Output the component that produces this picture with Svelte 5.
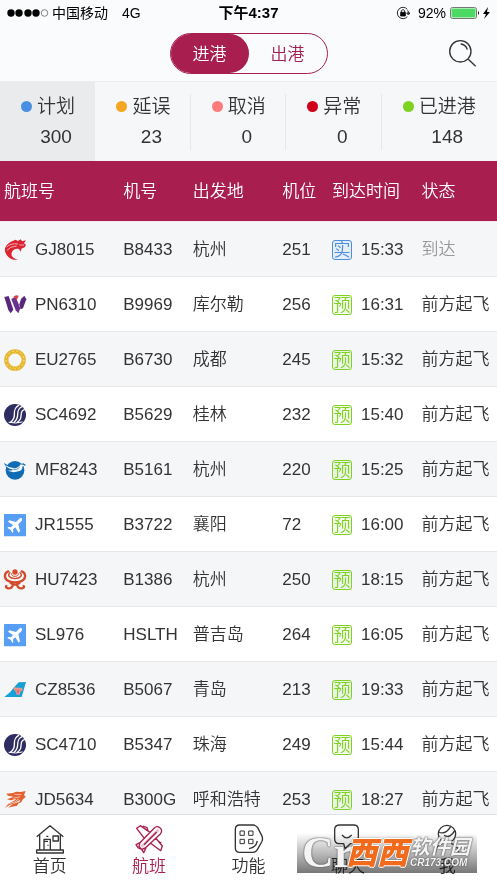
<script>
	const stats = [
		{ label: '计划', count: 300, color: '#4a90e2' },
		{ label: '延误', count: 23, color: '#f5a623' },
		{ label: '取消', count: 0, color: '#ff7b7b' },
		{ label: '异常', count: 0, color: '#d0021b' },
		{ label: '已进港', count: 148, color: '#7ed321' }
	];

	const columns = ['航班号', '机号', '出发地', '机位', '到达时间', '状态'];

	const flights = [
		{ logo: 'gj', no: 'GJ8015', plane: 'B8433', from: '杭州', gate: 251, time: '15:33', arrived: true },
		{ logo: 'pn', no: 'PN6310', plane: 'B9969', from: '库尔勒', gate: 256, time: '16:31' },
		{ logo: 'eu', no: 'EU2765', plane: 'B6730', from: '成都', gate: 245, time: '15:32' },
		{ logo: 'sc', no: 'SC4692', plane: 'B5629', from: '桂林', gate: 232, time: '15:40' },
		{ logo: 'mf', no: 'MF8243', plane: 'B5161', from: '杭州', gate: 220, time: '15:25' },
		{ logo: 'plane', no: 'JR1555', plane: 'B3722', from: '襄阳', gate: 72, time: '16:00' },
		{ logo: 'hu', no: 'HU7423', plane: 'B1386', from: '杭州', gate: 250, time: '18:15' },
		{ logo: 'plane', no: 'SL976', plane: 'HSLTH', from: '普吉岛', gate: 264, time: '16:05' },
		{ logo: 'cz', no: 'CZ8536', plane: 'B5067', from: '青岛', gate: 213, time: '19:33' },
		{ logo: 'sc', no: 'SC4710', plane: 'B5347', from: '珠海', gate: 249, time: '15:44' },
		{ logo: 'jd', no: 'JD5634', plane: 'B300G', from: '呼和浩特', gate: 253, time: '18:27' }
	];

	const tabs = [
		{ icon: 'home', label: '首页' },
		{ icon: 'flight', label: '航班' },
		{ icon: 'apps', label: '功能' },
		{ icon: 'chat', label: '聊天' },
		{ icon: 'me', label: '我' }
	];

	let direction = $state('进港');
	let selected = $state('计划');
	let tab = $state('航班');
</script>

{#snippet airline(name)}
	<svg class="logo" viewBox="0 0 66 66" aria-hidden="true">
		{#if name === 'gj'}
			<path
				fill="#dd2430"
				d="M28 5C8 12-2 28 5 42C10 55 24 65 42 62C28 59 20 51 23 41C26 32 38 27 45 31L51 38L52 29L62 25L66 17L60 13L66 4L54 7L50 1L42 6L34 2Z"
			/>
			<path
				fill="none"
				stroke="#f4f6f8"
				stroke-width="2"
				d="M8 24Q20 12 42 15M9 34Q18 22 38 21M46 18L60 18"
			/>
		{:else if name === 'pn'}
			<path fill="#58267c" d="M1 9L14 6L28 47L20 58L13 48Z" />
			<path fill="#6a328c" d="M22 15L35 8L49 43L43 58L35 49Z" />
			<path fill="#58267c" d="M51 15L61 5L67 16L57 43L50 46L46 31Z" />
			<path fill="#e23b45" d="M27 10Q36 0 44 6L38 18Q33 9 27 10Z" />
		{:else if name === 'eu'}
			<circle cx="33" cy="33" r="26" fill="none" stroke="#e5b52c" stroke-width="13" />
			<circle
				cx="33"
				cy="33"
				r="27"
				fill="none"
				stroke="#f7df87"
				stroke-width="3"
				stroke-dasharray="7 6"
			/>
			<circle
				cx="33"
				cy="33"
				r="21"
				fill="none"
				stroke="#f5e2a0"
				stroke-width="2"
				stroke-dasharray="4 5"
			/>
		{:else if name === 'sc'}
			<circle cx="33" cy="33" r="33" fill="#2e2c60" />
			<g fill="none" stroke="#fff" stroke-linecap="round">
				<path stroke-width="4" d="M44 4C24 15 35 31 29 43Q26 51 19 55" />
				<path stroke-width="4" d="M54 8C36 16 44 30 39 43Q36 51 30 55" />
				<path stroke-width="4" d="M61 17C47 20 54 35 49 45Q45 52 40 55" />
				<path stroke-width="3" d="M15 55Q35 60 55 54" />
			</g>
		{:else if name === 'mf'}
			<circle cx="33" cy="34" r="28" fill="#126cb5" />
			<path fill="#126cb5" d="M0 12Q14 22 30 25L20 36Q6 28 0 12ZM50 16L58 13L66 18L54 24Z" />
			<path
				fill="#f4f6f8"
				d="M3 17Q16 27 31 28Q43 27 50 16L57 17L62 19L55 23Q56 34 44 37Q25 43 9 34Q21 36 28 32Q10 29 3 17Z"
			/>
			<path fill="none" stroke="#126cb5" stroke-width="2" d="M28 32Q39 33 47 25" />
		{:else if name === 'plane'}
			<rect width="66" height="67" rx="2" fill="#579ef5" />
			<path
				fill="#fff"
				d="M53 13C56 16 54 20 50 24L43 31L48 52L44 56L34 40L27 46L28 54L25 57L20 47L10 42L13 39L21 40L27 33L12 23L16 19L36 24L43 17C47 13 50 11 53 13Z"
			/>
		{:else if name === 'hu'}
			<g fill="none" stroke="#d34a2c" stroke-linecap="round">
				<path stroke-width="7" d="M13 7C-2 13 0 32 16 37Q33 43 50 37C66 32 68 13 53 7" />
				<path stroke-width="4" d="M18 11C9 19 16 28 33 29C50 28 57 19 48 11" />
				<path stroke-width="3" d="M23 14Q22 22 33 22Q44 22 43 14" />
				<path
					stroke-width="7"
					d="M20 42Q28 47 33 47Q38 47 46 42M27 47Q24 59 12 58Q3 55 7 51M39 47Q42 59 54 58Q63 55 59 51"
				/>
			</g>
			<circle cx="33" cy="9" r="8" fill="#d34a2c" />
		{:else if name === 'cz'}
			<path fill="#16a0d5" d="M66 9L44 10Q31 24 18 40L1 54L53 54Z" />
			<path
				fill="#ed9b97"
				d="M29 28Q35 22 39 28Q42 21 46 28Q52 23 56 30Q56 36 49 38L47 47H38L36 39Q28 35 29 28Z"
			/>
			<path fill="none" stroke="#d94c52" stroke-width="2" d="M33 31L42 40L51 31M42 29V45" />
		{:else}
			<path
				fill="#e3602f"
				d="M7 14L27 12L36 8L50 9L65 6L60 18L65 24L57 31L51 40L44 44L49 32L36 39Q25 47 15 49L3 57L13 44L30 35L38 29L20 34L9 31L29 23L12 20Z"
			/>
			<path fill="#e3602f" d="M46 38L39 50L24 53L12 56L27 45Z" />
			<path fill="none" stroke="#f8e5dc" stroke-width="2" d="M31 16L52 17M27 28L48 23M14 45Q34 40 45 29" />
		{/if}
	</svg>
{/snippet}

{#snippet tabIcon(name)}
	<svg class="tab-icon" viewBox="0 0 90 90" aria-hidden="true">
		{#if name === 'home'}
			<path
				d="M5 38L45 5L85 38M14 32V78M76 32V78M5 78H85V87H5ZM27 78V46H46V78M27 52H39M39 62V65M34 37H40M54 36H70V51H54Z"
			/>
		{:else if name === 'flight'}
			<path
				d="M76 10C84 14 85 23 79 30L34 72L23 76L15 67L18 56L61 12Q68 5 76 10ZM48 25L19 5L8 13L31 43M65 42L85 66L80 80L50 58M18 56L6 62L13 72L23 76L29 86L36 71M30 62L68 24M27 6L39 11L42 20M72 51L82 57"
			/>
			<path d="M22 69L74 17" stroke-width="9" opacity="0.25" />
		{:else if name === 'apps'}
			<path
				d="M17 3H58Q65 3 71 11L83 34Q88 44 83 54L70 77Q65 85 57 85H17Q4 85 4 72V16Q4 3 17 3ZM45 74Q66 71 70 51"
			/>
			<path
				stroke-width="3"
				d="M18 21H31V34H18ZM44 21H57V34H44ZM18 46H31V59H18ZM44 46H57V59H44Z"
			/>
		{:else if name === 'chat'}
			<path
				d="M18 3H64Q76 4 76 17V44Q76 58 62 59H52L36 74L32 59H18Q5 58 5 44V17Q5 4 18 3ZM27 33Q41 50 56 33"
			/>
		{:else}
			<circle cx="45" cy="30" r="26" />
			<path d="M20 24Q40 34 56 8M36 34Q56 44 68 20M10 87Q11 65 33 58M57 58Q79 65 80 87" />
		{/if}
	</svg>
{/snippet}

<div class="app">
	<div class="status-bar">
		<div class="carrier">
			<svg width="42" height="10" viewBox="0 0 42 10" aria-hidden="true">
				{#each [4, 12, 21, 29] as x}
					<circle cx={x} cy="5" r="3.7" />
				{/each}
				<circle cx="37.5" cy="5" r="3.3" fill="none" stroke="#555" stroke-width="0.7" />
			</svg>
			<span>中国移动</span>
			<span class="network">4G</span>
		</div>
		<strong>下午4:37</strong>
		<div class="power">
			<svg width="14" height="14" viewBox="0 0 42 42" aria-hidden="true">
				<path
					d="M34 10A17 17 0 1 0 34 32M35 13Q38 18 37 23M32 21L37 27L42 21Z"
					fill="none"
					stroke="#000"
					stroke-width="2.5"
				/>
				<path d="M14 19H28V30H14ZM16 19V14Q21 7 26 14V19" stroke="#000" stroke-width="2.5" fill="none" />
				<path d="M14 19H28V30H14Z" />
			</svg>
			<span class="percent">92%</span>
			<svg width="40" height="14" viewBox="0 0 40 14" aria-hidden="true">
				<rect x="0.5" y="1.5" width="26" height="11" rx="2" fill="#fff" stroke="#777" />
				<rect x="1.5" y="2.5" width="24" height="9" rx="1" fill="#4cd964" />
				<path d="M28 5Q30 7 28 9Z" />
				<path d="M38 1L33 8H36L34 13L40 6H37Z" />
			</svg>
		</div>
	</div>

	<header>
		<div class="toggle">
			{#each ['进港', '出港'] as name}
				<button class:active={direction === name} onclick={() => (direction = name)}>{name}</button>
			{/each}
		</div>
		<button class="search" aria-label="搜索">
			<svg width="28" height="28" viewBox="0 0 84 84">
				<circle cx="34" cy="34" r="32" />
				<path d="M57 57L80 79M35 12Q50 13 55 29" />
			</svg>
		</button>
	</header>

	<div class="stats">
		{#each stats as stat}
			<button class:active={selected === stat.label} onclick={() => (selected = stat.label)}>
				<i style="background: {stat.color}"></i>
				<span>{stat.label}</span>
				<span class="count">{stat.count}</span>
			</button>
		{/each}
	</div>

	<main>
		<table>
			<thead>
				<tr>
					{#each columns as column}
						<th>{column}</th>
					{/each}
				</tr>
			</thead>
			<tbody>
				{#each flights as flight}
					<tr>
						<td>
							<div class="flight">
								{@render airline(flight.logo)}
								<span>{flight.no}</span>
							</div>
						</td>
						<td>{flight.plane}</td>
						<td>{flight.from}</td>
						<td>{flight.gate}</td>
						<td>
							<div class="time">
								<span class="badge" class:actual={flight.arrived}>{flight.arrived ? '实' : '预'}</span>
								<span>{flight.time}</span>
							</div>
						</td>
						<td class:muted={flight.arrived}>{flight.arrived ? '到达' : '前方起飞'}</td>
					</tr>
				{/each}
			</tbody>
		</table>
	</main>

	<nav>
		{#each tabs as item}
			<a href="#{item.icon}" class:active={tab === item.label} onclick={() => (tab = item.label)}>
				{@render tabIcon(item.icon)}
				<span>{item.label}</span>
			</a>
		{/each}
		<div class="shade"></div>
		<div class="watermark">
			<span class="cr">Cr</span>
			<span class="brand">西西</span>
			<div class="site">
				<span>软件园</span>
				<small>CR173.COM</small>
			</div>
		</div>
	</nav>
</div>

<style>
	:global(body) {
		margin: 0;
	}

	.app {
		display: flex;
		flex-direction: column;
		height: 100vh;
		overflow: hidden;
		background: #fafbfd;
		color: #333;
		font-family: 'Liberation Sans', 'Noto Sans CJK SC', sans-serif;
		font-size: 17px;
		font-weight: 350;
		line-height: 24px;
	}

	button {
		margin: 0;
		padding: 0;
		border: 0;
		background: none;
		color: inherit;
		font: inherit;
	}

	.status-bar {
		display: grid;
		grid-template-columns: 1fr auto 1fr;
		align-items: center;
		flex: none;
		height: 26px;
		padding: 0 7px;
		color: #000;
		font-size: 14px;
		font-weight: 400;
	}

	.status-bar strong {
		font-size: 15px;
		font-weight: 700;
	}

	.carrier,
	.power {
		display: flex;
		align-items: center;
	}

	.carrier svg {
		margin-right: 3px;
	}

	.network {
		margin-left: 14px;
	}

	.power {
		justify-content: flex-end;
	}

	.percent {
		margin: 0 4px 0 8px;
	}

	header {
		display: grid;
		grid-template-columns: 1fr auto 1fr;
		align-items: center;
		flex: none;
		height: 56px;
		box-sizing: border-box;
		padding: 0 20px;
		border-bottom: 1px solid #ecedef;
	}

	.toggle {
		grid-column: 2;
		display: flex;
		box-sizing: border-box;
		width: 158px;
		height: 41px;
		border: 1px solid #a81e4e;
		border-radius: 21px;
		color: #a81e4e;
	}

	.toggle button {
		flex: 1;
		border-radius: 20px;
		padding-top: 3px;
	}

	.toggle .active {
		background: #a81e4e;
		color: #fff;
	}

	.search {
		justify-self: end;
		height: 28px;
	}

	.search svg {
		display: block;
		fill: none;
		stroke: #333;
		stroke-width: 4;
	}

	.stats {
		display: grid;
		grid-template-columns: repeat(4, 24fr) 29fr;
		flex: none;
		height: 79px;
		background: #f6f7f9;
		font-size: 19px;
	}

	.stats button {
		display: grid;
		grid-template-columns: 11px auto;
		grid-template-rows: 30px 30px;
		place-content: center start;
		align-items: center;
		gap: 0 5px;
		padding-left: 21px;
		background: linear-gradient(#e6e8ea, #e6e8ea) right / 1px 56px no-repeat;
	}

	.stats button:last-child {
		background: none;
	}

	.stats .active {
		background: #e9ebed;
	}

	.stats i {
		width: 11px;
		height: 11px;
		border-radius: 50%;
	}

	.count {
		grid-column: 2;
		text-align: center;
	}

	main {
		flex: 1;
		min-height: 0;
		overflow: hidden;
	}

	table {
		width: 100%;
		table-layout: fixed;
		border-collapse: separate;
		border-spacing: 0;
		white-space: nowrap;
	}

	th,
	td {
		box-sizing: border-box;
		height: 55px;
		padding: 2px 0 0 4px;
		border-bottom: 1px solid #e6e8ea;
		text-align: left;
		font-weight: 350;
	}

	th {
		height: 61px;
		border-bottom-color: #f8e4ec;
		background: #a81e4e;
		color: #fff;
	}

	th:nth-child(1) {
		width: 24%;
	}

	th:nth-child(2) {
		width: 14%;
	}

	th:nth-child(3),
	th:nth-child(5) {
		width: 18%;
	}

	th:nth-child(4) {
		width: 10%;
	}

	tbody tr {
		background: #fff;
	}

	tbody tr:nth-child(odd) {
		background: #f4f6f8;
	}

	.flight,
	.time {
		display: flex;
		align-items: center;
		gap: 9px;
	}

	.logo {
		width: 22px;
		height: 22px;
		overflow: visible;
	}

	.badge {
		box-sizing: border-box;
		width: 20px;
		height: 20px;
		border: 1px solid #7ed321;
		border-radius: 3px;
		background: rgba(126, 211, 33, 0.08);
		color: #7ed321;
		line-height: 19px;
		text-align: center;
	}

	.badge.actual {
		border-color: #4a90e2;
		background: rgba(74, 144, 226, 0.08);
		color: #4a90e2;
	}

	.muted {
		color: #999;
	}

	nav {
		position: relative;
		display: flex;
		flex: none;
		height: 69px;
		box-sizing: border-box;
		border-top: 1px solid #dfe2e5;
		background: #fff;
	}

	nav a {
		display: flex;
		flex: 1;
		flex-direction: column;
		align-items: center;
		padding-top: 9px;
		color: #333;
		line-height: 26px;
		text-decoration: none;
	}

	nav .active {
		color: #a81e4e;
	}

	.tab-icon {
		flex: none;
		width: 30px;
		height: 30px;
		fill: none;
		stroke: currentColor;
		stroke-width: 4;
		stroke-linejoin: round;
	}

	.shade,
	.watermark {
		position: absolute;
		right: 20px;
		bottom: 10px;
		width: 180px;
		height: 40px;
	}

	.shade {
		background: linear-gradient(#fff, #777);
		mix-blend-mode: multiply;
	}

	.watermark {
		display: flex;
		align-items: center;
		box-sizing: border-box;
		padding-left: 5px;
		color: #f4f4f4;
		font-style: italic;
		line-height: 1;
		text-shadow:
			0 0 1px #555,
			0 0 2px #555;
		pointer-events: none;
	}

	.cr {
		width: 44px;
		font-family: 'Liberation Serif', serif;
		font-size: 44px;
		font-style: normal;
		font-weight: 700;
		line-height: 36px;
	}

	.brand {
		color: #f26a1c;
		font-size: 31px;
		font-weight: 900;
		text-shadow:
			1px 0 #fff,
			-1px 0 #fff,
			0 1px #fff,
			0 -1px #fff,
			0 0 3px #555;
	}

	.site {
		display: flex;
		flex-direction: column;
		margin-left: 2px;
		font-size: 20px;
		font-weight: 700;
	}

	.site small {
		font-size: 10px;
		line-height: 12px;
	}
</style>
